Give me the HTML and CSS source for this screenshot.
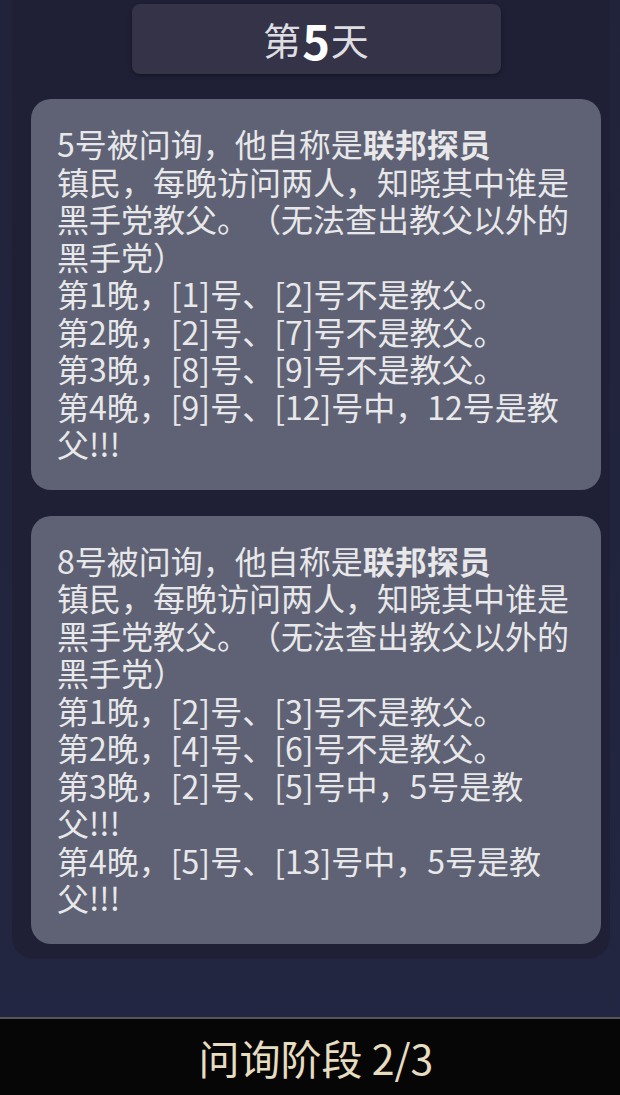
FILE: index.html
```html
<!DOCTYPE html>
<html lang="zh-CN">
<head>
    <meta charset="UTF-8">
    <title>问询阶段</title>
    <link rel="stylesheet" href="styles.css">
</head>
<body>
    <main class="stage">
        <div class="panel">
            <div class="day-title">第<b>5</b>天</div>

            <div class="report">
                <p>5号被问询，他自称是<b>联邦探员</b></p>
                <p>镇民，每晚访问两人，知晓其中谁是黑手党教父。（无法查出教父以外的黑手党）</p>
                <p>第1晚，[1]号、[2]号不是教父。</p>
                <p>第2晚，[2]号、[7]号不是教父。</p>
                <p>第3晚，[8]号、[9]号不是教父。</p>
                <p>第4晚，[9]号、[12]号中，12号是教父!!!</p>
            </div>

            <div class="report">
                <p>8号被问询，他自称是<b>联邦探员</b></p>
                <p>镇民，每晚访问两人，知晓其中谁是黑手党教父。（无法查出教父以外的黑手党）</p>
                <p>第1晚，[2]号、[3]号不是教父。</p>
                <p>第2晚，[4]号、[6]号不是教父。</p>
                <p>第3晚，[2]号、[5]号中，5号是教父!!!</p>
                <p>第4晚，[5]号、[13]号中，5号是教父!!!</p>
            </div>
        </div>
    </main>

    <footer class="phase-bar">
        <span class="phase-text">问询阶段 2/3</span>
    </footer>
</body>
</html>
```

FILE: styles.css
```css
/* 全局 */
:root {
    --page-bg: #22243d;
    --panel-bg: #1f2036;
    --title-bg: #343347;
    --card-bg: #5e6274;
    --text-color: #e8e8ea;
    --phase-color: #e6dcc0;
}

* {
    margin: 0;
    padding: 0;
    box-sizing: border-box;
}

body {
    width: 620px;
    height: 1095px;
    overflow: hidden;
    display: flex;
    flex-direction: column;
    background: linear-gradient(#21233a, #232642);
    color: var(--text-color);
    font-family: "Noto Sans CJK SC", "Noto Sans", sans-serif;
    text-spacing-trim: space-all;
}

/* 上方面板 */
.stage {
    flex: 1;
    padding: 0 10px 0 12px;
}

.panel {
    display: flex;
    flex-direction: column;
    gap: 25px;
    padding: 4px 9px 15px 19px;
    background: var(--panel-bg);
    border-radius: 0 0 22px 22px;
}

.day-title {
    align-self: center;
    width: 369px;
    height: 70px;
    display: flex;
    justify-content: center;
    align-items: center;
    background: var(--title-bg);
    border-radius: 8px;
    box-shadow: 0 2px 4px rgba(0, 0, 0, 0.35);
    font-size: 38px;
    line-height: 1;
    color: #dedde2;
}

.day-title b {
    font-size: 47px;
    color: #ffffff;
    margin: 0 1px;
}

/* 问询记录卡片 */
.report {
    background: var(--card-bg);
    border-radius: 20px;
    padding: 26px 22px 27px 26px;
    font-size: 32px;
    line-height: 37.5px;
}

.report + .report {
    margin-top: 1px;
}

.report b {
    font-weight: 700;
}

/* 底部阶段栏 */
.phase-bar {
    height: 78px;
    display: flex;
    justify-content: center;
    align-items: center;
    padding-left: 12px;
    background: #070606;
    border-top: 2px solid #56555a;
}

.phase-text {
    font-size: 41px;
    line-height: 1;
    color: var(--phase-color);
}
```
